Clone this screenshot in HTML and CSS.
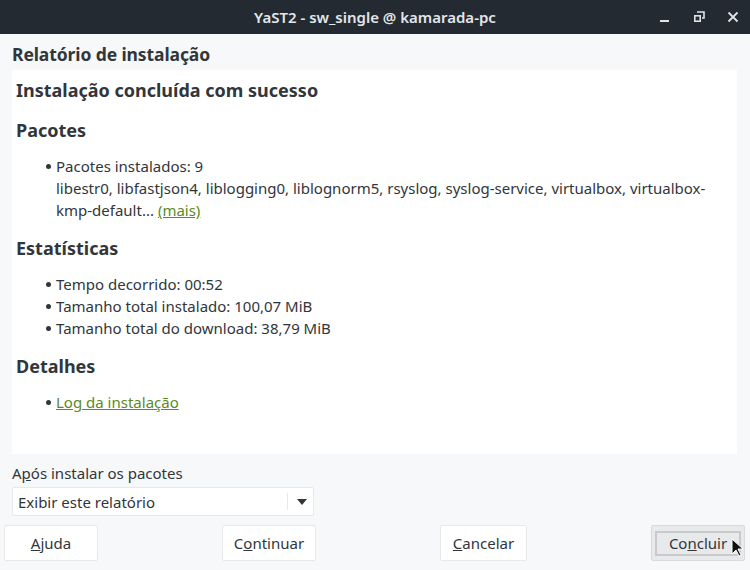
FILE: index.html
```html
<!DOCTYPE html>
<html lang="pt">
<head>
<meta charset="utf-8">
<link rel="stylesheet" href="styles.css">
</head>
<body>
<div class="window">
  <header class="titlebar">
    <div class="title">YaST2 - sw_single @ kamarada-pc</div>
    <div class="controls">
      <svg class="ctl" width="12" height="12" viewBox="0 0 12 12"><rect x="1" y="9" width="9" height="2" fill="#dfe3e6"/></svg>
      <svg class="ctl" width="12" height="12" viewBox="0 0 12 12"><path d="M4 1h7v6H9" fill="none" stroke="#dfe3e6" stroke-width="1.6"/><rect x="1.8" y="4.8" width="5.4" height="5.4" fill="none" stroke="#dfe3e6" stroke-width="1.6"/></svg>
      <svg class="ctl" width="12" height="12" viewBox="0 0 12 12"><path d="M1.5 1.5l9 9M10.5 1.5l-9 9" stroke="#dfe3e6" stroke-width="1.8"/></svg>
    </div>
  </header>
  <main class="content">
    <h1 class="page-title">Relatório de instalação</h1>
    <section class="report">
      <h2 class="big">Instalação concluída com sucesso</h2>
      <h3>Pacotes</h3>
      <ul>
        <li>Pacotes instalados: 9<br>libestr0, libfastjson4, liblogging0, liblognorm5, rsyslog, syslog-service, virtualbox, virtualbox-kmp-default... <a href="#">(mais)</a></li>
      </ul>
      <h3>Estatísticas</h3>
      <ul>
        <li>Tempo decorrido: 00:52</li>
        <li>Tamanho total instalado: 100,07 MiB</li>
        <li>Tamanho total do download: 38,79 MiB</li>
      </ul>
      <h3>Detalhes</h3>
      <ul>
        <li><a href="#">Log da instalação</a></li>
      </ul>
    </section>
    <div class="after">
      <label class="after-label">A<u>p</u>ós instalar os pacotes</label>
      <div class="combo">
        <span>Exibir este relatório</span>
        <span class="combo-arrow"><svg width="10" height="6" viewBox="0 0 10 6"><path d="M0 0h10L5 6z" fill="#31363b"/></svg></span>
      </div>
    </div>
    <div class="buttons">
      <button class="btn"><u>A</u>juda</button>
      <button class="btn">C<u>o</u>ntinuar</button>
      <button class="btn"><u>C</u>ancelar</button>
      <button class="btn default"><span class="focus">Co<u>n</u>cluir</span></button>
    </div>
  </main>
</div>
<svg class="cursor" width="14" height="20" viewBox="0 0 14 20"><path d="M1 1v15l4-4 3 6 2-1-3-6h5z" fill="#111" stroke="#fff" stroke-width="1"/></svg>
</body>
</html>
```
FILE: styles.css
```css
html, body {
  margin: 0;
  padding: 0;
}
body {
  width: 750px;
  height: 570px;
  overflow: hidden;
  font-family: "Noto Sans", "DejaVu Sans", sans-serif;
  color: #31363b;
  background: #f7f8f9;
  position: relative;
}
.window {
  display: flex;
  flex-direction: column;
  height: 570px;
}
.titlebar {
  height: 34px;
  background: #232a31;
  display: flex;
  align-items: center;
  justify-content: center;
  position: relative;
}
.title {
  color: #e3e6e8;
  font-size: 15px;
  font-weight: 600;
  letter-spacing: 0;
}
.controls {
  position: absolute;
  right: 11px;
  top: 11px;
  display: flex;
  gap: 22px;
}
.ctl { display: block; }
.content {
  flex: 1;
  display: flex;
  flex-direction: column;
  padding: 0 4px 0 12px;
}
.page-title {
  margin: 9px 0 5px;
  font-size: 17.5px;
  font-weight: 700;
  letter-spacing: -0.1px;
  line-height: 22px;
}
.report {
  background: #ffffff;
  margin-right: 9px;
  height: 384px;
  padding: 8px 4px 0 4px;
  box-sizing: border-box;
  font-size: 15px;
}
.report h2.big {
  margin: 0 0 16px;
  font-size: 18px;
  line-height: 24px;
  font-weight: 700;
}
.report h3 {
  margin: 0 0 13px;
  font-size: 18px;
  line-height: 24px;
  font-weight: 700;
}
.report ul {
  margin: 0 0 15px;
  padding: 0 0 0 40px;
  list-style: none;
  line-height: 22px;
}
.report li {
  position: relative;
}
.report li::before {
  content: "";
  position: absolute;
  left: -10px;
  top: 9px;
  width: 5px;
  height: 5px;
  border-radius: 50%;
  background: #31363b;
}
.report a {
  color: #5b8a1e;
  text-decoration: underline;
}
.after {
  margin-top: 8px;
  display: flex;
  flex-direction: column;
  gap: 3px;
}
.after-label {
  font-size: 15px;
  line-height: 22px;
}
.combo {
  width: 302px;
  height: 29px;
  box-sizing: border-box;
  border: 1px solid #e6e8ea;
  border-radius: 2px;
  background: #fff;
  display: flex;
  align-items: center;
  justify-content: space-between;
  padding: 0 6px 0 5px;
  font-size: 15px;
}
.combo-arrow {
  display: flex;
  align-items: center;
  padding-left: 9px;
  border-left: 1px solid #e6e8ea;
  height: 17px;
}
.buttons {
  margin-top: 9px;
  margin-left: -8px;
  display: flex;
  justify-content: space-between;
  align-items: center;
  padding-right: 1px;
}
.btn {
  font-family: "Noto Sans", "DejaVu Sans", sans-serif;
  font-size: 15px;
  color: #31363b;
  background: #fff;
  border: 1px solid #e6e8ea;
  border-radius: 2px;
  height: 36px;
  width: 94px;
  padding: 0;
}
.btn:nth-child(3) { width: 87px; }
.btn.default {
  background: #e8e9eb;
  border-color: #d8dadc;
  display: flex;
  align-items: center;
  justify-content: center;
}
.focus {
  display: block;
  border: 2px solid #c8cacc;
  width: 82px;
  height: 21px;
  line-height: 21px;
}
.cursor {
  position: absolute;
  left: 731px;
  top: 538px;
}
```
